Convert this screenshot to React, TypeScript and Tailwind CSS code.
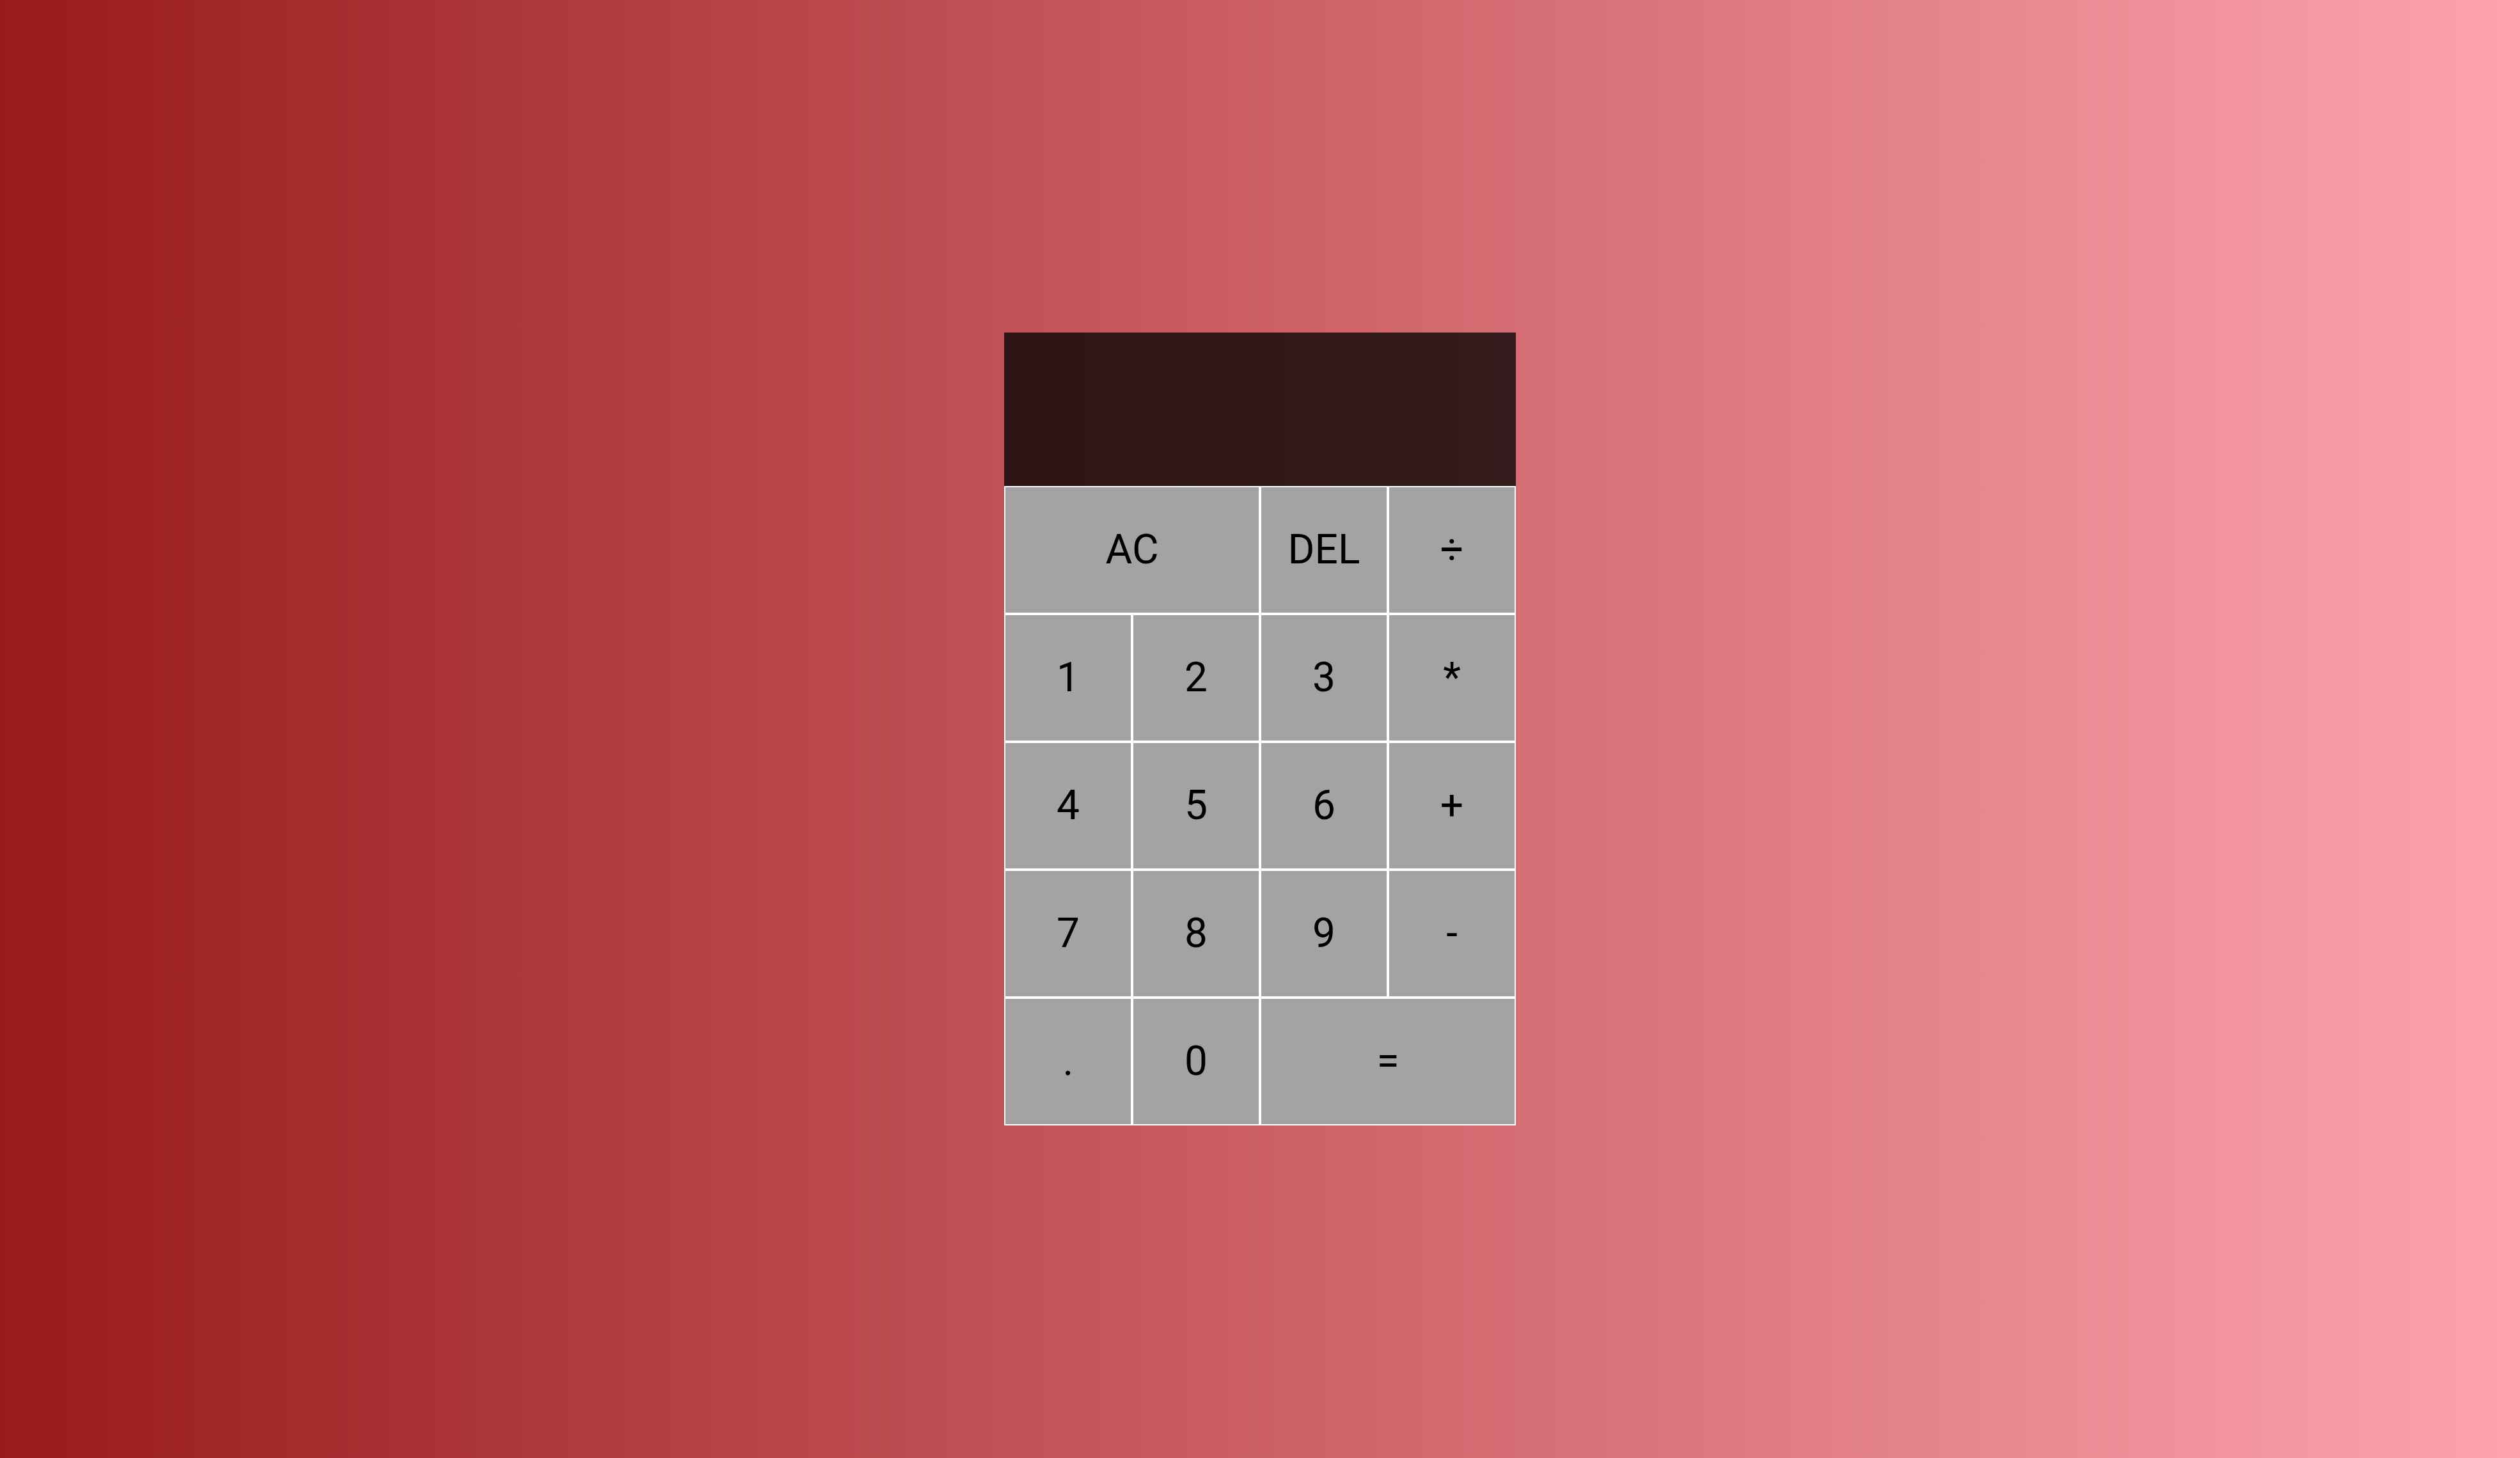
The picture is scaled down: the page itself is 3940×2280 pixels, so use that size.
const keys: { label: string; span?: boolean }[] = [
  { label: 'AC', span: true },
  { label: 'DEL' },
  { label: '÷' },
  { label: '1' },
  { label: '2' },
  { label: '3' },
  { label: '*' },
  { label: '4' },
  { label: '5' },
  { label: '6' },
  { label: '+' },
  { label: '7' },
  { label: '8' },
  { label: '9' },
  { label: '-' },
  { label: '.' },
  { label: '0' },
  { label: '=', span: true },
]

export default function App() {
  return (
    <div className="min-h-screen w-full flex items-center justify-center bg-linear-to-r/srgb from-[#991b1b] to-[#fda4af] font-['Roboto',sans-serif]">
      <div className="grid grid-cols-[repeat(4,200px)] grid-rows-[240px_repeat(5,200px)]">
        <div className="col-span-4 bg-black/75 flex flex-col items-end justify-around px-5 py-5 break-all text-white" />
        {keys.map((k) => (
          <button
            key={k.label}
            className={`${k.span ? 'col-span-2' : ''} border-2 border-white bg-[#a3a3a3] text-black text-[64px] leading-none cursor-pointer`}
          >
            {k.label}
          </button>
        ))}
      </div>
    </div>
  )
}
